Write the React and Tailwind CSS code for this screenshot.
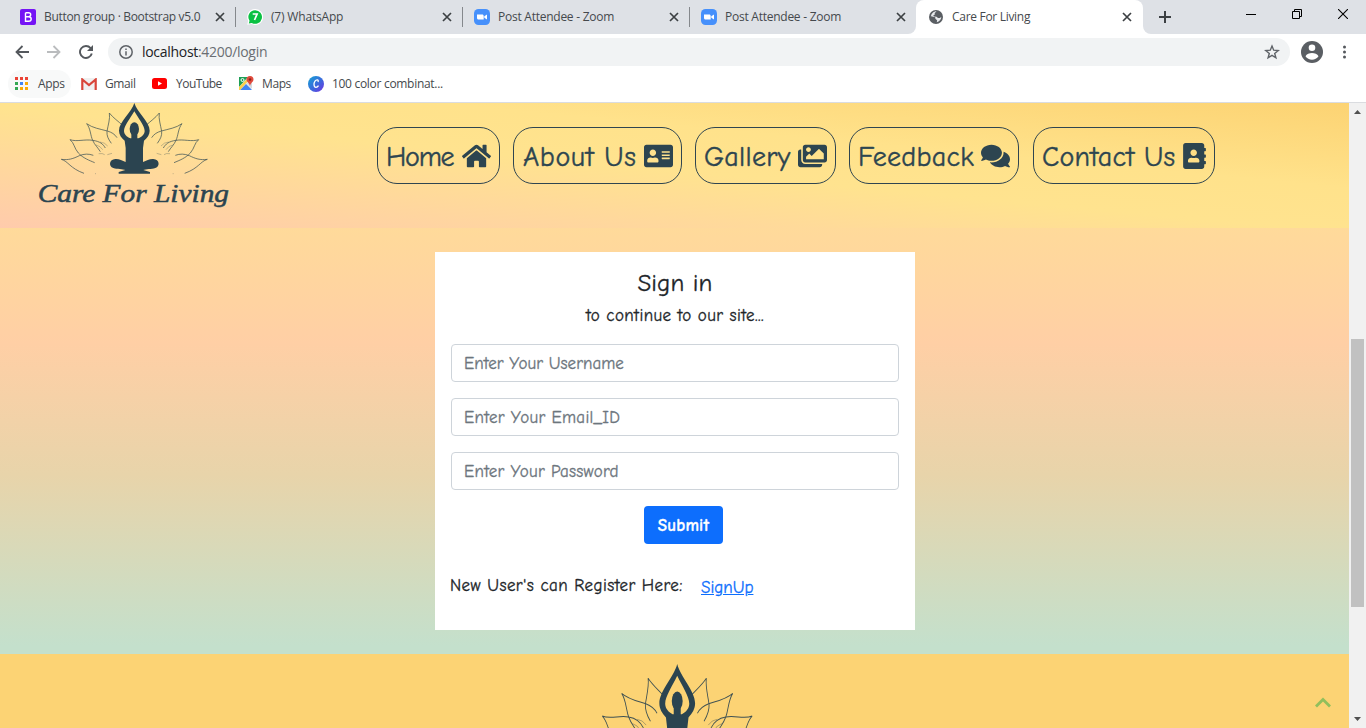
import React from "react";
import { FaHome, FaAddressCard, FaImages, FaComments, FaAddressBook } from "react-icons/fa";

const COMIC = "font-['Comic_Sans_MS','Comic_Neue','Open_Sans',sans-serif]";

function CloseIcon() {
  return (
    <svg className="size-[10px] shrink-0" viewBox="0 0 10 10" stroke="#3c4043" strokeWidth="1.7">
      <path d="M1 1l8 8M9 1l-8 8" />
    </svg>
  );
}

function BootstrapIcon() {
  return (
    <svg className="size-4 shrink-0" viewBox="0 0 16 16">
      <rect width="16" height="16" rx="2" fill="#7514f5" />
      <path d="M5.500 3.700h3c1.400 0 2.200.7 2.200 1.900S9.900 7.600 8.700 7.600H5.500M5.500 7.700h3.300c1.500 0 2.400.8 2.400 2.200s-1 2.300-2.600 2.300H5.500V3.700" fill="none" stroke="#fff" strokeWidth="1.400" />
    </svg>
  );
}

function WhatsAppIcon() {
  return (
    <svg className="size-4 shrink-0" viewBox="0 0 16 16">
      <path d="M8 0a8 8 0 1 1-3.500 15.100L.3 15.800l.8-4A8 8 0 0 1 8 0z" fill="#fff" />
      <path d="M8 1.200a6.800 6.800 0 1 1-3.200 12.700l-3 .6.700-2.800A6.800 6.800 0 0 1 8 1.200z" fill="#0bc143" />
      <path d="M5.700 5h4.400L7.500 11" fill="none" stroke="#fff" strokeWidth="1.700" />
    </svg>
  );
}

function ZoomIcon() {
  return (
    <svg className="size-4 shrink-0" viewBox="0 0 16 16">
      <rect width="16" height="16" rx="4.500" fill="#4690fb" />
      <path d="M3 5.500h5.200c.9 0 1.500.6 1.500 1.500v3.500H4.500c-.9 0-1.500-.6-1.500-1.500zM10.300 7.300l2.700-1.700v4.800l-2.700-1.700z" fill="#fff" />
    </svg>
  );
}

function GlobeIcon() {
  return (
    <svg className="size-[14px] shrink-0" viewBox="0 0 14 14">
      <circle cx="7" cy="7" r="7" fill="#5a5e63" />
      <path d="M7.600 1.300L5.500 3.200l.7 1-1.900 1 .7 1.300 2.500.2 1.500 1.200 1.800.1 1.500-.9c0 2.500-2 4.700-4.500 5.100l.3-1.900-1.700-1.500-.2-1.500L2 6.200C2.200 3.500 4.800 1.300 7.600 1.300z" fill="#e8eaed" />
    </svg>
  );
}

function Tab({ icon, label, track, last }) {
  return (
    <div className="flex h-[34px] w-[227px] shrink-0 items-center">
      <div className="ml-[11px] flex">{icon}</div>
      <span className={`ml-2 flex-1 whitespace-nowrap ${track}`}>{label}</span>
      <CloseIcon />
      <span className={`ml-[10px] h-5 w-px ${last ? "bg-transparent" : "bg-[#85888c]"}`} />
    </div>
  );
}

function TabStrip() {
  return (
    <div className="flex h-[34px] bg-[#dee1e6] text-[12px] text-[#45494d]">
      <div className="flex w-[236px] items-center pl-[9px]">
        <Tab icon={<BootstrapIcon />} label="Button group · Bootstrap v5.0" track="tracking-[-0.32px]" />
      </div>
      <Tab icon={<WhatsAppIcon />} label="(7) WhatsApp" track="tracking-[-0.18px]" />
      <Tab icon={<ZoomIcon />} label="Post Attendee - Zoom" track="tracking-[-0.25px]" />
      <Tab icon={<ZoomIcon />} label="Post Attendee - Zoom" track="tracking-[-0.25px]" last />
      <div className="-ml-[9px] flex h-[34px] items-end">
        <span className="size-2 bg-white"><span className="block size-2 rounded-br-lg bg-[#dee1e6]" /></span>
        <div className="flex h-[34px] w-[227px] items-center rounded-t-lg bg-white pr-[11px] pl-[13px]">
          <GlobeIcon />
          <span className="ml-[9px] flex-1 tracking-[-0.3px]">Care For Living</span>
          <CloseIcon />
        </div>
        <span className="size-2 bg-white"><span className="block size-2 rounded-bl-lg bg-[#dee1e6]" /></span>
      </div>
      <svg className="mt-[11px] ml-2 size-3" viewBox="0 0 12 12" stroke="#3c4043" strokeWidth="2"><path d="M6 0v12M0 6h12" /></svg>
      <div className="flex flex-1 items-start justify-end gap-9 pt-[9px] pr-[18px]">
        <svg className="size-[10px]" viewBox="0 0 10 10" stroke="#000"><path d="M0 5.500h10" /></svg>
        <svg className="size-[10px]" viewBox="0 0 10 10" stroke="#000" fill="none"><path d="M.5 2.500h7v7h-7zM2.500 2.500v-2h7v7h-2" /></svg>
        <svg className="size-[10px]" viewBox="0 0 10 10" stroke="#000" strokeWidth="1.100"><path d="M0 0l10 10M10 0L0 10" /></svg>
      </div>
    </div>
  );
}

function Toolbar() {
  return (
    <div className="flex h-9 items-center bg-white">
      <svg className="ml-[15px] size-[14px]" viewBox="0 0 14 14" fill="none" stroke="#54585d" strokeWidth="1.800"><path d="M14 7H1.500M7.500 1L1.500 7l6 6" /></svg>
      <svg className="ml-[18px] size-[14px]" viewBox="0 0 14 14" fill="none" stroke="#babcbe" strokeWidth="1.800"><path d="M0 7h12.500M6.500 1l6 6-6 6" /></svg>
      <svg className="ml-[18px] size-[14px]" viewBox="0 0 14 14" fill="none" stroke="#54585d" strokeWidth="1.900"><path d="M12.800 8.500A6 6 0 1 1 11.600 3.100L13 4.600" /><path d="M14 0v6H8z" fill="#54585d" stroke="none" /></svg>
      <div className="ml-[15px] flex h-7 w-[1182px] items-center rounded-full bg-[#f1f3f4] pr-[10px] pl-[11px]">
        <svg className="size-[14px]" viewBox="0 0 14 14" fill="none" stroke="#5f6368" strokeWidth="1.500"><circle cx="7" cy="7" r="6.200" /><path d="M7 6.200v4.300M7 3.400v1.500" /></svg>
        <span className="ml-[9px] flex-1 pb-px text-[14px] tracking-[-0.3px] text-[#6a6e73]"><span className="text-[#202124]">localhost</span>:4200/login</span>
        <svg className="size-4" viewBox="0 0 16 16" fill="none" stroke="#5f6368" strokeWidth="1.400"><path d="M8 2l1.700 4.200 4.500.3-3.500 2.900 1.200 4.400L8 11.400l-3.900 2.400 1.200-4.400L1.800 6.500l4.500-.3z" /></svg>
      </div>
      <svg className="ml-[11px] size-[22px]" viewBox="0 0 22 22"><circle cx="11" cy="11" r="11" fill="#5a5e63" /><circle cx="11" cy="6.800" r="3.300" fill="#fff" /><path d="M4.500 15.300c1-2.600 4-3.400 6.500-3.400s5.500.8 6.500 3.400a7.900 7.900 0 0 1-13 0z" fill="#fff" /></svg>
      <svg className="ml-5 h-[14px] w-[3px]" viewBox="0 0 3 14" fill="#54585d"><circle cx="1.500" cy="2" r="1.500" /><circle cx="1.500" cy="7" r="1.500" /><circle cx="1.500" cy="12" r="1.500" /></svg>
    </div>
  );
}

function Bookmarks() {
  const dots = ["#ea4335", "#ea4335", "#ea4335", "#34a853", "#4285f4", "#fbab05", "#34a853", "#fbab05", "#fbab05"];
  return (
    <div className="flex h-8 items-center bg-white pb-[5px] text-[12px] text-[#45494d]">
      <div className="ml-2 flex h-7 w-[63px] items-center rounded-full bg-[#f8f9f9] pl-[7px]">
        <svg className="size-[13px] shrink-0" viewBox="0 0 13 13">
          {dots.map((c, i) => <rect key={i} x={(i % 3) * 5} y={Math.floor(i / 3) * 5} width="3" height="3" fill={c} />)}
        </svg>
        <span className="ml-[10px] tracking-[-0.3px]">Apps</span>
      </div>
      <svg className="ml-[10px] h-3 w-4" viewBox="0 0 16 12"><path d="M1 0h14v12H1z" fill="#f0f0f0" /><path d="M1.300 12V1.500L8 7l6.700-5.500V12" fill="none" stroke="#d9453a" strokeWidth="2.200" /></svg>
      <span className="ml-2 w-[31px] tracking-[-0.4px]">Gmail</span>
      <svg className="ml-4 h-[11px] w-[15px]" viewBox="0 0 15 11"><rect width="15" height="11" rx="2.500" fill="#f00" /><path d="M6 3.200l4 2.300-4 2.300z" fill="#fff" /></svg>
      <span className="ml-[9px] w-[46px] tracking-[-0.5px]">YouTube</span>
      <svg className="ml-[17px] size-[15px]" viewBox="0 0 15 15">
        <path d="M0 1h12v13H0z" fill="#e4e7ea" /><path d="M0 1h9L0 11z" fill="#1e9f56" /><path d="M1 14l6-6 6 6z" fill="#4285f4" /><path d="M0 11l9-9 1 2-9 10H0z" fill="#fbd04a" /><path d="M8 7l5 6V7z" fill="#d5dade" />
        <circle cx="3.500" cy="4" r="1.500" fill="none" stroke="#fff" /><path d="M11 0a3.500 3.500 0 0 1 3.500 3.500C14.500 6 11.500 7 11 10 10.500 7 7.500 6 7.500 3.500A3.500 3.500 0 0 1 11 0z" fill="#e04a3c" /><circle cx="11" cy="3.500" r="1.300" fill="#8c201a" />
      </svg>
      <span className="ml-2 w-[30px] tracking-[-0.4px]">Maps</span>
      <svg className="ml-4 size-4" viewBox="0 0 16 16">
        <defs><linearGradient id="canva" x1="0" y1="0" x2="1" y2="1"><stop offset="0" stopColor="#14a5d3" /><stop offset=".55" stopColor="#3b68dd" /><stop offset="1" stopColor="#7431df" /></linearGradient></defs>
        <circle cx="8" cy="8" r="8" fill="url(#canva)" /><path d="M10 6c1-2.500-1.600-2.700-3-.8C5.500 7.300 5.600 11.300 8 11.300c1.200 0 2-.9 2.500-1.700" fill="none" stroke="#fff" strokeWidth="1.300" />
      </svg>
      <span className="ml-2 whitespace-nowrap tracking-[-0.3px]">100 color combinat...</span>
    </div>
  );
}

function PetalSide() {
  return (
    <g fill="none" stroke="#2b4450" strokeWidth="2.200" opacity=".9">
      <path d="M268 45C280 60 295 70 308 82M268 45C271 62 264 82 261 100C260 113 264 122 274 136" />
      <path d="M200 77C218 90 240 93 262 99C275 103 284 108 291 119M200 77C212 92 211 112 218 127C224 141 234 149 241 161" />
      <path d="M150 125C170 132 195 123 218 127C240 130 249 138 256 150M150 125C163 135 162 150 175 165C190 181 208 187 224 194" />
      <path d="M124 184C145 187 160 182 178 173C193 167 206 167 220 172M124 184C145 190 150 211 192 226" />
      <path d="M240 132q14 1 23 12M228 141q13 3 20 14M236 167q12-2 18 3M262 170l14-4M225 227h3" strokeWidth="1.600" opacity=".6" />
    </g>
  );
}

function LotusFigure() {
  return (
    <>
      <PetalSide />
      <g transform="translate(686 0) scale(-1 1)"><PetalSide /></g>
      <g fill="#2b4450">
        <path d="M343 15C351 42 389 72 389 98C389 110 382 119 372 128L369 150L369 192C380 188 389 182 400 183C419 184 421 205 406 210C394 214 378 213 370 216L390 222V227H296V222L316 216C308 213 292 214 280 210C265 205 267 184 286 183C297 182 306 188 317 192L317 150L314 128C304 119 297 110 297 98C297 72 335 42 343 15ZM343 40C330 62 312 84 312 99C312 108 320 117 331 121H355C366 117 374 108 374 99C374 84 356 62 343 40Z" />
        <ellipse cx="343" cy="93" rx="14" ry="20" />
        <path d="M334 105h18v20h-18z" />
      </g>
    </>
  );
}

function Logo() {
  return (
    <svg className="ml-5 h-[125px] w-[230px] shrink-0" viewBox="0 15 690 375">
      <LotusFigure />
      <text x="53" y="312" textLength="574" lengthAdjust="spacingAndGlyphs" fill="#2b4450" stroke="#2b4450" strokeWidth="1.500" fontSize="76" fontStyle="italic" fontFamily="'Brush Script MT','Liberation Serif',serif">Care For Living</text>
    </svg>
  );
}

function NavItem({ label, Icon, box, track, icon }) {
  return (
    <a className={`flex h-[57px] items-center justify-between rounded-[20px] border border-[#2f4550] px-2 text-[28px] whitespace-nowrap text-[#2d4550] ${box}`}>
      <span className={`pt-[2px] [-webkit-text-stroke:0.4px_#2d4550] ${track}`}>{label}</span>
      <Icon className={`h-[26px] shrink-0 ${icon}`} />
    </a>
  );
}

function Header() {
  return (
    <header className="flex h-[125px] bg-[linear-gradient(to_top_right,#ffcbac_0%,#ffe38f_48%,#ffe28b_66%,#fcd373_100%)]">
      <Logo />
      <nav className="ml-[127px] flex pt-6">
        <NavItem label="Home" Icon={FaHome} box="w-[123px]" track="tracking-[-1.2px]" icon="w-[29px]" />
        <NavItem label="About Us" Icon={FaAddressCard} box="ml-[13px] w-[169px] pl-[9px]" track="tracking-[0.6px]" icon="w-[29px]" />
        <NavItem label="Gallery" Icon={FaImages} box="ml-[13px] w-[141px]" track="tracking-[0.3px]" icon="w-[29px]" />
        <NavItem label="Feedback" Icon={FaComments} box="ml-[13px] w-[170px]" track="tracking-[0.25px]" icon="w-[29px]" />
        <NavItem label="Contact Us" Icon={FaAddressBook} box="ml-[14px] w-[182px]" track="tracking-[0.25px]" icon="w-[23px]" />
      </nav>
    </header>
  );
}

function Field({ label, type, track }) {
  return <input type={type} placeholder={label} className={`mb-4 block h-[38px] w-full rounded-[4px] border border-[#ced4da] bg-white px-3 text-[17px] [-webkit-text-stroke:0.3px] placeholder:text-[#6c757d] placeholder:opacity-100 ${track}`} />;
}

function SignIn() {
  return (
    <main className="h-[426px] bg-[linear-gradient(to_bottom,#ffda9a_0%,#ffcfa5_27%,#e8d4aa_58%,#c4e0cc_98%)] pt-6">
      <form className="ml-[435px] h-[378px] w-[480px] bg-white px-4 pt-4 text-[#212529] [-webkit-text-stroke:0.3px]">
        <h4 className="text-center text-[25px] leading-[29px]"><span className="tracking-[0.1px]">Sign in</span></h4>
        <p className="mt-[7px] mb-4 text-center text-[17px] leading-[24px]"><span className="tracking-[0.4px]">to continue to our site...</span></p>
        <Field label="Enter Your Username" type="text" track="tracking-[0.05px]" />
        <Field label="Enter Your Email_ID" type="email" track="tracking-[0.3px]" />
        <Field label="Enter Your Password" type="password" track="tracking-[0.25px]" />
        <button type="button" className="ml-[193px] flex h-[38px] w-[79px] items-center justify-center rounded-[4px] bg-[#0d6efd] pt-px text-[17px] font-semibold text-white"><span className="tracking-[0.2px]">Submit</span></button>
        <div className="mt-[30px] flex h-6 items-start text-[17px] leading-6">
          <span className="-ml-px w-[251px] whitespace-nowrap tracking-[0.43px]">New User's can Register Here:</span>
          <a className="mt-[2px] text-[#0d6efd] underline"><span>SignUp</span></a>
        </div>
      </form>
    </main>
  );
}

function Footer() {
  return (
    <footer className="flex h-[74px] items-end justify-between overflow-hidden bg-[#fcd374]">
      <svg className="ml-[544px] h-[64px] w-[268px] shrink-0" viewBox="0 15 690 135.200" preserveAspectRatio="none"><LotusFigure /></svg>
      <svg className="mr-[18px] mb-[20px] h-[11px] w-4" viewBox="0 0 16 11" fill="none" stroke="#91bf5c" strokeWidth="2.800"><path d="M1 9.500l7-7 7 7" /></svg>
    </footer>
  );
}

function Scrollbar() {
  return (
    <div className="flex w-[17px] flex-col items-center bg-[#f1f1f1]">
      <svg className="mt-[7px] h-1 w-[7px]" viewBox="0 0 7 4" fill="#505050"><path d="M3.500 0L7 4H0z" /></svg>
      <div className="mt-[225px] h-[268px] w-[13px] bg-[#c1c1c1]" />
      <svg className="mt-[110px] h-1 w-[7px]" viewBox="0 0 7 4" fill="#505050"><path d="M3.500 4L7 0H0z" /></svg>
    </div>
  );
}

export default function App() {
  return (
    <div className="flex h-[728px] w-[1366px] flex-col overflow-hidden bg-white font-['Segoe_UI','Open_Sans',sans-serif]">
      <TabStrip />
      <Toolbar />
      <Bookmarks />
      <div className="h-px shrink-0 bg-[#dadce0]" />
      <div className="flex h-[625px]">
        <div className={`w-[1349px] ${COMIC}`}>
          <Header />
          <SignIn />
          <Footer />
        </div>
        <Scrollbar />
      </div>
    </div>
  );
}
